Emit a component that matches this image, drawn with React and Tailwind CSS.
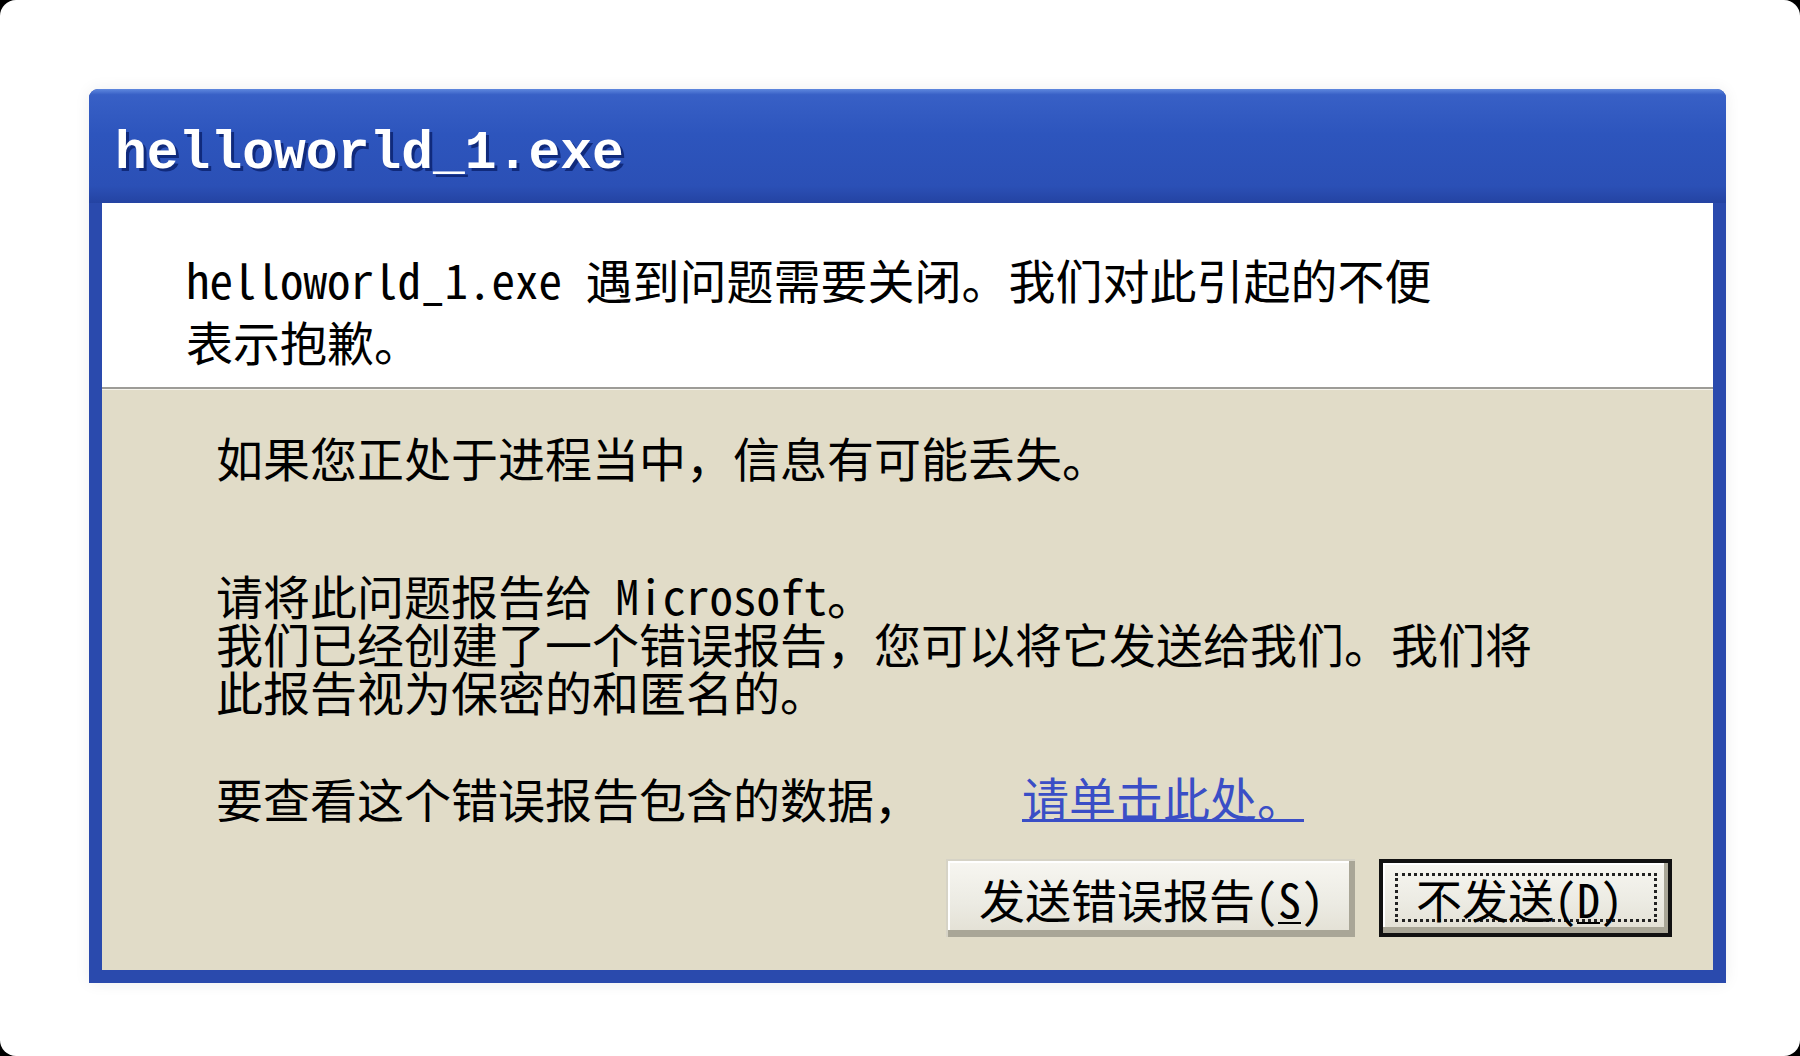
import React from 'react';

const bodyFont = {
  fontFamily: '"Noto Sans Mono CJK SC", "Noto Sans CJK SC", "Liberation Mono", monospace',
};

const XpButton = ({ children, isDefault = false }) => {
  if (isDefault) {
    return (
      <div className="h-[78px] w-[293px] border-4 border-[#111] bg-[#111]">
        <div className="relative flex h-full w-full items-center justify-center bg-[linear-gradient(180deg,#f7f6f1_0%,#ecebe3_55%,#e2dfd3_100%)] shadow-[inset_-4px_-6px_0_#a9a697,inset_2px_2px_0_#ffffff]">
          <div className="absolute left-[12px] right-[11px] top-[10px] bottom-[11px] border-[3px] border-dotted border-[#222]" />
          <span className="relative -translate-x-[6px] text-[46px] leading-none text-black">{children}</span>
        </div>
      </div>
    );
  }
  return (
    <div className="flex h-[78px] w-[409px] items-center justify-center border-t-2 border-l-2 border-[#d6d3c6] bg-[linear-gradient(180deg,#f7f6f1_0%,#ecebe3_55%,#e2dfd3_100%)] shadow-[inset_-6px_-7px_0_#a9a697,inset_2px_2px_0_#ffffff]">
      <span className="-translate-y-[1px] text-[46px] leading-none text-black">{children}</span>
    </div>
  );
};

export default function App() {
  return (
    <div className="h-[1056px] w-[1800px] bg-black" style={bodyFont}>
      <div className="h-full w-full overflow-hidden rounded-[16px] bg-white pl-[89px] pt-[89px]">
        <div className="w-[1637px] rounded-t-[9px] bg-[#2a4aad] pb-[13px] shadow-[0_0_16px_rgba(0,0,0,0.07)]">
          {/* title bar */}
          <div className="flex h-[114px] items-center rounded-t-[9px] bg-[linear-gradient(180deg,#5f88de_0%,#3860c6_5%,#2d55bd_40%,#2b50b6_85%,#2443a2_100%)] pl-[26px] pt-[16px]">
            <span
              className="text-[53px] font-bold leading-none text-white [text-shadow:3px_3px_0_#102a7c]"
              style={{ fontFamily: '"Liberation Mono", "DejaVu Sans Mono", monospace' }}
            >
              helloworld_1.exe
            </span>
          </div>

          <div className="mx-[13px]">
            {/* white message area */}
            <div className="h-[184px] bg-white pl-[84px] pt-[45px]">
              <p className="whitespace-nowrap text-[47px] leading-[62px] text-black">
                helloworld_1.exe 遇到问题需要关闭。我们对此引起的不便
                <br />
                表示抱歉。
              </p>
            </div>
            <div className="h-[2px] bg-[#9d9c97]" />
            <div className="h-[1px] bg-[#f6f4ec]" />

            {/* beige body */}
            <div className="h-[580px] bg-[#e1dcc8] pl-[114px] pt-[43px]">
              <p className="whitespace-nowrap text-[47px] leading-[48px] text-black">
                如果您正处于进程当中，信息有可能丢失。
              </p>
              <p className="mt-[90px] whitespace-nowrap text-[47px] leading-[48px] text-black">
                请将此问题报告给 Microsoft。
                <br />
                我们已经创建了一个错误报告，您可以将它发送给我们。我们将
                <br />
                此报告视为保密的和匿名的。
              </p>
              <p className="mt-[59px] flex whitespace-nowrap text-[47px] leading-[48px] text-black">
                <span>要查看这个错误报告包含的数据，</span>
                <span className="ml-[101px] inline-block border-b-[3px] border-[#3a4ec6] leading-[45px] text-[#3a4ec6]">
                  请单击此处。
                </span>
              </p>
              <div className="mt-[37px] flex justify-end gap-[24px] pr-[41px]">
                <XpButton>
                  发送错误报告(<span className="underline decoration-2 underline-offset-4">S</span>)
                </XpButton>
                <XpButton isDefault>
                  不发送(<span className="underline decoration-2 underline-offset-4">D</span>)
                </XpButton>
              </div>
            </div>
          </div>
        </div>
      </div>
    </div>
  );
}
